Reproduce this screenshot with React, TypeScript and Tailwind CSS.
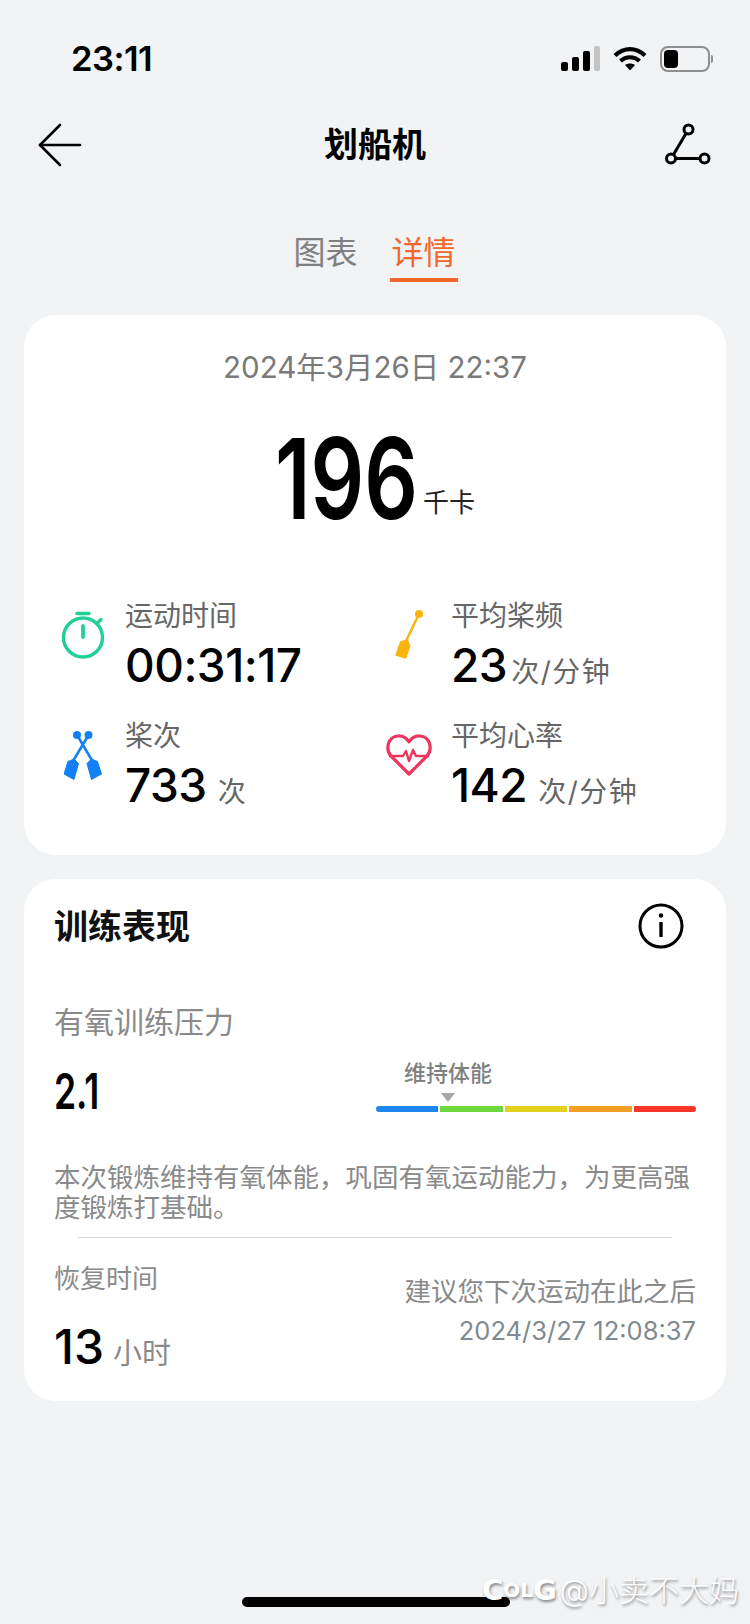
const sans = "font-['Inter','Noto_Sans_CJK_SC',sans-serif]";

function Stopwatch() {
  return (
    <svg width="46" height="48" viewBox="0 0 46 48" fill="none" stroke="#22cf98" strokeWidth="3.400" strokeLinecap="round">
      <circle cx="23" cy="26.5" r="19.500" />
      <path d="M17 2.500h12" />
      <path d="M23 15v11" strokeWidth="3.800" />
      <path d="M37.500 12l3.500-3.500" />
    </svg>
  );
}

function CrossedPaddles() {
  return (
    <svg width="38" height="49" viewBox="0 0 38 49" fill="#1180f5">
      <circle cx="13" cy="4" r="4" />
      <circle cx="24.500" cy="4" r="4" />
      <path d="M13 4l16 27M24.500 4L8.500 31" stroke="#1180f5" strokeWidth="2.500" />
      <path d="M10 28l-6 2.500L0 43l10 5.500 4.500-16z" stroke="#1180f5" strokeWidth="1" strokeLinejoin="round" />
      <path d="M27.500 28l6 2.500L37.500 43l-10 5.500-4.500-16z" stroke="#1180f5" strokeWidth="1" strokeLinejoin="round" />
    </svg>
  );
}

function Paddle() {
  return (
    <svg width="28" height="50" viewBox="0 0 28 50" fill="#fbb40f">
      <circle cx="24" cy="4" r="4" />
      <path d="M24 4L11 31" stroke="#fbb40f" strokeWidth="2.500" />
      <path d="M5.700 32l6.600-2 2.400 6-4 12L1 45z" stroke="#fbb40f" strokeWidth="1.500" strokeLinejoin="round" />
    </svg>
  );
}

function HeartRate() {
  return (
    <svg width="46" height="42" viewBox="0 0 46 42" fill="none" stroke="#ee3560" strokeWidth="3.200" strokeLinejoin="round" strokeLinecap="round">
      <path d="M23 40L5 22C-1 15 2 2.500 12 2c5-.3 8.500 2 11 6 2.500-4 6-6.300 11-6 10 .5 13 13 7 20z" />
      <path d="M4 22h13l3-5 3 10 4-11 3 6h12" strokeWidth="2.400" />
    </svg>
  );
}

function Stat({ icon, label, value, unit, unitGap }: { icon: React.ReactNode; label: string; value: string; unit?: string; unitGap?: string }) {
  return (
    <div className="flex items-center h-[120px]">
      <div className="w-[55px] flex justify-center mr-[15px] mb-[20px] shrink-0">{icon}</div>
      <div className="flex flex-col">
        <div className="text-[28px] leading-[36px] text-[#666666]">{label}</div>
        <div className="flex items-baseline mt-[3px]">
          <span className="text-[46px] leading-[56px] font-medium text-black tracking-[-0.5px]">{value}</span>
          {unit && <span className={`text-[28px] tracking-[1.5px] text-[#666666] ${unitGap}`}>{unit}</span>}
        </div>
      </div>
    </div>
  );
}

export default function App() {
  return (
    <div className={`${sans} relative w-[750px] h-[1624px] bg-[#f1f3f5] overflow-hidden`}>
      {/* status bar */}
      <div className="flex items-center justify-between h-[100px] pt-[18px] pl-[71px] pr-[37px]">
        <span className="text-[34.500px] font-semibold text-black leading-none tracking-[-0.5px]">23:11</span>
        <div className="flex items-center gap-[12px]">
          <svg width="40" height="26" viewBox="0 0 40 26">
            <rect x="0" y="16" width="7" height="9" rx="2" fill="#000" />
            <rect x="11" y="11" width="7" height="14" rx="2" fill="#000" />
            <rect x="22" y="5" width="7" height="20" rx="2" fill="#000" />
            <rect x="33" y="0" width="6" height="25" rx="2" fill="#c4c4c4" />
          </svg>
          <svg width="34" height="26" viewBox="0 0 34 26" fill="none" stroke="#000" strokeWidth="4.200">
            <path d="M2 9.500C11 1 23 1 32 9.500" />
            <path d="M7.500 15C13 10 21 10 26.500 15" />
            <path d="M17 24.500l-5-5.500c3-2 7-2 10 0z" fill="#000" stroke="none" />
          </svg>
          <div className="flex items-center ml-[1px]">
            <div className="w-[50px] h-[26px] rounded-[8px] border-2 border-[#8e8e8e] p-[2px]">
              <div className="w-[14px] h-full rounded-[4px] bg-black" />
            </div>
            <div className="w-[2px] h-[8px] bg-[#8e8e8e] rounded-r-full ml-[1px]" />
          </div>
        </div>
      </div>

      {/* nav */}
      <div className="relative flex items-center justify-between h-[90px] pl-[38px] pr-[37px]">
        <svg width="44" height="44" viewBox="0 0 44 44" fill="none" stroke="#000" strokeWidth="2.600" strokeLinecap="round" strokeLinejoin="round">
          <path d="M22 2L2 22l20 20" />
          <path d="M2 22h40" />
        </svg>
        <div className="absolute inset-x-0 text-center text-[34px] font-bold text-black leading-none">划船机</div>
        <svg width="48" height="44" viewBox="0 0 48 44" fill="none" stroke="#000" strokeWidth="3">
          <circle cx="23.500" cy="6.500" r="4.500" />
          <circle cx="6" cy="35.500" r="4.500" />
          <circle cx="39.500" cy="35.500" r="4.500" />
          <path d="M21 10.500L8.500 31.500M10.500 35.500H35" />
        </svg>
      </div>

      {/* tabs */}
      <div className="flex justify-center gap-[31px] mt-[41px] ml-[1px]">
        <div className="text-[32px] leading-[44px] text-[#808080] pr-[1px]">图表</div>
        <div className="text-[32px] leading-[44px] text-[#f2682a] px-[2px] pb-[3px] border-b-4 border-[#f2682a]">详情</div>
      </div>

      {/* summary card */}
      <div className="mx-[24px] mt-[33px] h-[540px] rounded-[32px] bg-white flex flex-col">
        <div className="text-center text-[29.500px] leading-[38px] text-[#7a7a7a] mt-[33px]">2024年3月26日 22:37</div>
        <div className="flex items-baseline justify-center mt-[37px] h-[110px]">
          <span className="inline-block w-[140px] whitespace-nowrap origin-left scale-x-[0.75] font-semibold text-[112px] leading-[110px] text-black">196</span>
          <span className="text-[26px] text-[#222222] ml-[8px] -translate-y-[7px]">千卡</span>
        </div>
        <div className="grid grid-cols-[326px_1fr] mt-[52px] pl-[31px]">
          <Stat icon={<Stopwatch />} label="运动时间" value="00:31:17" />
          <Stat icon={<Paddle />} label="平均桨频" value="23" unit="次/分钟" unitGap="ml-[4px]" />
          <Stat icon={<CrossedPaddles />} label="桨次" value="733" unit="次" unitGap="ml-[11px]" />
          <Stat icon={<HeartRate />} label="平均心率" value="142" unit="次/分钟" unitGap="ml-[11px]" />
        </div>
      </div>

      {/* training card */}
      <div className="mx-[24px] mt-[24px] h-[522px] rounded-[32px] bg-white pl-[30px] pr-[30px] flex flex-col">
        <div className="flex items-center justify-between mt-[24px] h-[46px] pr-[12px]">
          <span className="text-[34px] font-bold text-[#111111]">训练表现</span>
          <svg width="46" height="46" viewBox="0 0 46 46" fill="none" stroke="#000" strokeWidth="3">
            <circle cx="23" cy="23" r="21" />
            <path d="M23 19v15" strokeWidth="3.400" />
            <circle cx="23" cy="12.500" r="2.200" fill="#000" stroke="none" />
          </svg>
        </div>
        <div className="text-[30px] leading-[38px] text-[#8a8a8a] mt-[54px]">有氧训练压力</div>
        <div className="flex items-end justify-between mt-[17px] h-[58px]">
          <span className="inline-block w-[46px] whitespace-nowrap origin-left scale-x-[0.71] font-semibold text-[50px] leading-[50px] text-black">2.1</span>
          <div className="w-[320px] flex flex-col">
            <div className="text-[22px] leading-[28px] font-medium text-[#808080] ml-[28px]">维持体能</div>
            <div className="w-0 h-0 ml-[65px] mt-[6px] border-x-[7px] border-x-transparent border-t-[9px] border-t-[#a8a8a8]" />
            <div className="flex gap-[2px] mt-[4px] mb-[4px] h-[6px]">
              <div className="flex-1 bg-[#1e86ef] rounded-l-full" />
              <div className="flex-1 bg-[#6cd83c]" />
              <div className="flex-1 bg-[#e3d11f]" />
              <div className="flex-1 bg-[#f29f25]" />
              <div className="flex-1 bg-[#f53527] rounded-r-full" />
            </div>
          </div>
        </div>
        <p className="text-[26.500px] leading-[30px] text-[#8a8a8a] mt-[46px]">本次锻炼维持有氧体能，巩固有氧运动能力，为更高强度锻炼打基础。</p>
        <div className="h-px bg-[#d9d9d9] mx-[24px] mt-[15px]" />
        <div className="flex justify-between mt-[23px]">
          <div className="flex flex-col">
            <span className="text-[26px] leading-[36px] text-[#8a8a8a]">恢复时间</span>
            <div className="flex items-baseline mt-[22px]">
              <span className="text-[48px] leading-[56px] font-medium text-black">13</span>
              <span className="text-[29px] text-[#8a8a8a] ml-[9px]">小时</span>
            </div>
          </div>
          <div className="flex flex-col items-end">
            <span className="text-[26.500px] leading-[36px] text-[#8a8a8a] mt-[12px]">建议您下次运动在此之后</span>
            <span className="text-[25.500px] leading-[36px] text-[#808a90] mt-[4px]">2024/3/27 12:08:37</span>
          </div>
        </div>
      </div>

      {/* home indicator */}
      <div className="absolute left-[242px] top-[1597px] w-[268px] h-[10px] rounded-full bg-black" />

      {/* watermark */}
      <div className="absolute right-[11px] top-[1575px] flex items-center text-white [text-shadow:1px_2px_3px_rgba(0,0,0,0.45)]">
        <span className="font-['DejaVu_Sans',sans-serif] font-bold leading-none mr-[3px] flex items-center">
          <span className="text-[29px]">C</span>
          <span className="text-[20px]">OL</span>
          <span className="text-[29px]">G</span>
        </span>
        <span className="text-[30px] leading-none font-light">@小卖不大妈</span>
      </div>
    </div>
  );
}
